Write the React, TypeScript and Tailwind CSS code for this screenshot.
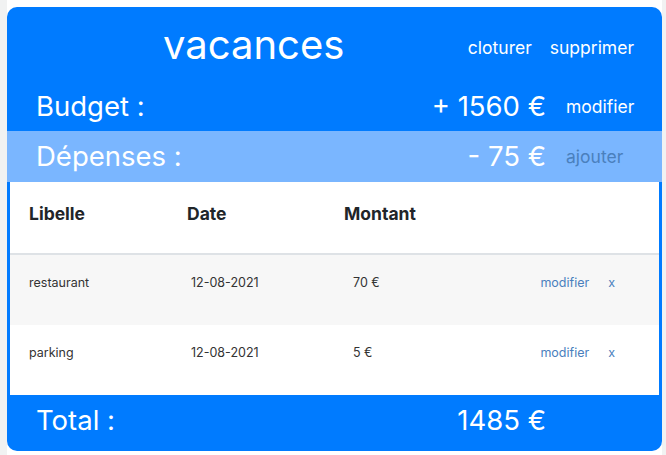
const depenses = [
  { libelle: "restaurant", date: "12-08-2021", montant: "70 €" },
  { libelle: "parking", date: "12-08-2021", montant: "5 €" },
];

const Row = ({
  label,
  amount,
  action,
  actionClass,
  className,
}: {
  label: string;
  amount: string;
  action?: string;
  actionClass?: string;
  className: string;
}) => (
  <div className={`flex items-center text-white ${className}`}>
    <div className="pl-[29px] text-[27.5px] leading-none">{label}</div>
    <div className="ml-auto text-[27.5px] leading-none">{amount}</div>
    <div className={`w-[116px] pl-[20px] text-[17.5px] leading-none ${actionClass ?? ""}`}>
      {action}
    </div>
  </div>
);

export default function App() {
  return (
    <div
      className="flex h-[455px] w-[666px] bg-white"
      style={{ fontFamily: "Inter, 'Noto Sans', sans-serif" }}
    >
      <div className="w-[7px] bg-[#f1f2f2]" />
      <div className="w-[655px] pt-[7px]">
        <div className="flex h-[444px] flex-col overflow-hidden rounded-[10px] bg-[#007bff]">
          <div className="flex h-[75px] items-center text-white">
            <h1 className="pl-[156px] text-[40px] leading-none">vacances</h1>
            <div className="ml-auto flex gap-[18px] pr-[28px] pt-[6px] text-[17.5px] leading-none">
              <span>cloturer</span>
              <span>supprimer</span>
            </div>
          </div>
          <Row className="h-[49px]" label="Budget :" amount="+ 1560 €" action="modifier" />
          <Row
            className="h-[51px] bg-[#7ab6ff]"
            label="Dépenses :"
            amount="- 75 €"
            action="ajouter"
            actionClass="text-[#4a80bd]"
          />
          <div className="mx-[3px] bg-white text-[#212529]">
            <div className="flex h-[73px] items-start border-b-2 border-[#dee2e6] pl-[19px] pt-[19px] text-[17.5px] font-bold leading-[26px]">
              <div className="w-[158px]">Libelle</div>
              <div className="w-[157px]">Date</div>
              <div>Montant</div>
            </div>
            {depenses.map((d, i) => (
              <div
                key={d.libelle}
                className={`flex h-[70px] items-start pt-[19px] pl-[19px] text-[12.5px] text-[#333] ${
                  i === 0 ? "bg-[#f7f7f7]" : "bg-white"
                }`}
              >
                <div className="w-[162px]">{d.libelle}</div>
                <div className="w-[162px]">{d.date}</div>
                <div>{d.montant}</div>
                <div className="ml-auto flex gap-[19px] pr-[44px] text-[#4a80bd]">
                  <span>modifier</span>
                  <span>x</span>
                </div>
              </div>
            ))}
          </div>
          <Row className="flex-1 pb-[5px]" label="Total :" amount="1485 €" />
        </div>
      </div>
      <div className="flex-1 bg-[#f1f2f2]" />
    </div>
  );
}
